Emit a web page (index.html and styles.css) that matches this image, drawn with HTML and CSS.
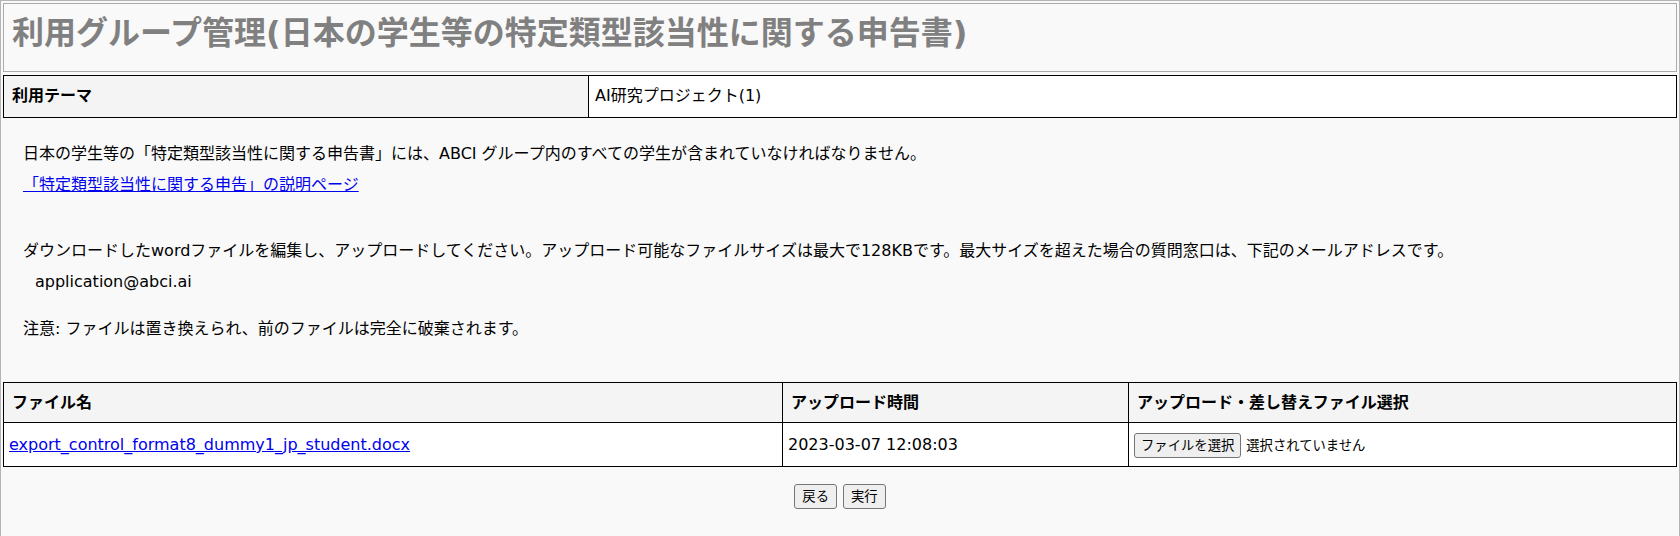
FILE: index.html
```html
<!DOCTYPE html>
<html lang="ja">
<head>
<meta charset="utf-8">
<title>利用グループ管理</title>
<link rel="stylesheet" href="styles.css">
</head>
<body>
<div class="page">
  <div class="title-box">
    <h1 class="title">利用グループ管理(日本の学生等の特定類型該当性に関する申告書)</h1>
  </div>

  <table class="info-table">
    <colgroup><col class="info-label-col"><col></colgroup>
    <tr>
      <th>利用テーマ</th>
      <td>AI研究プロジェクト(1)</td>
    </tr>
  </table>

  <div class="notice">
    <p class="line">日本の学生等の「特定類型該当性に関する申告書」には、ABCI グループ内のすべての学生が含まれていなければなりません。</p>
    <p class="line line-link"><a class="link" href="#">「特定類型該当性に関する申告」の説明ページ</a></p>
    <p class="line line-dl">ダウンロードしたwordファイルを編集し、アップロードしてください。アップロード可能なファイルサイズは最大で128KBです。最大サイズを超えた場合の質問窓口は、下記のメールアドレスです。</p>
    <p class="line line-mail">application@abci.ai</p>
    <p class="line line-note">注意: ファイルは置き換えられ、前のファイルは完全に破棄されます。</p>
  </div>

  <table class="file-table">
    <colgroup><col class="file-name-col"><col class="file-time-col"><col></colgroup>
    <tr>
      <th>ファイル名</th>
      <th>アップロード時間</th>
      <th>アップロード・差し替えファイル選択</th>
    </tr>
    <tr>
      <td><a class="link" href="#">export_control_format8_dummy1_jp_student.docx</a></td>
      <td>2023-03-07 12:08:03</td>
      <td class="file-cell">
        <div class="file-field">
          <button class="btn file-btn" type="button">ファイルを選択</button>
          <span class="file-status">選択されていません</span>
        </div>
      </td>
    </tr>
  </table>

  <div class="actions">
    <button class="btn action-btn" type="button">戻る</button>
    <button class="btn action-btn" type="button">実行</button>
  </div>
</div>
</body>
</html>
```

FILE: styles.css
```css
html, body {
  margin: 0;
  padding: 0;
}

body {
  background: #f9f9f9;
  color: #000;
  font-family: "DejaVu Sans", "Noto Sans CJK JP", sans-serif;
  font-size: 16px;
}

.page {
  height: 100vh;
  box-sizing: border-box;
  border: 1px solid #b4b4b4;
  border-bottom: 0;
  padding: 2px;
}

.title-box {
  height: 69px;
  box-sizing: border-box;
  border: 1px solid #aaaaaa;
  padding: 6px 8px 0;
}

.title {
  margin: 0;
  font-size: 32px;
  line-height: 47px;
  font-weight: bold;
  color: #808080;
  white-space: nowrap;
}

.info-table,
.file-table {
  width: 100%;
  border-collapse: collapse;
  table-layout: fixed;
}

.info-table {
  margin-top: 3px;
}

.info-label-col {
  width: 585px;
}

.file-name-col {
  width: 779px;
}

.file-time-col {
  width: 346px;
}

.info-table th,
.info-table td,
.file-table th,
.file-table td {
  border: 1px solid #000;
  text-align: left;
  vertical-align: middle;
}

.info-table th,
.file-table th {
  background: #f4f4f4;
  font-weight: bold;
}

.info-table td,
.file-table td {
  background: #ffffff;
}

.info-table th,
.info-table td {
  line-height: 24px;
  padding: 8px 6px 9px;
}

.info-table th {
  padding-left: 8px;
}

.file-table th {
  line-height: 24px;
  padding: 8px 8px 7px;
}

.file-table td {
  line-height: 25px;
  padding: 9px 5px 9px;
  white-space: nowrap;
}

.file-table td.file-cell {
  padding-top: 10px;
  padding-bottom: 8px;
}

.notice {
  padding: 21px 20px 0;
}

.line {
  margin: 0;
  line-height: 30px;
  white-space: nowrap;
}

.line-link {
  margin-top: 1px;
}

.line-dl {
  margin-top: 36px;
}

.line-mail {
  margin-top: 1px;
  padding-left: 12px;
}

.line-note {
  margin-top: 17px;
}

.link {
  color: #0000ee;
  text-decoration: underline;
}

.file-table {
  margin-top: 38px;
}

.file-field {
  display: flex;
  align-items: center;
  height: 25px;
}

.btn {
  box-sizing: border-box;
  height: 25px;
  margin: 0;
  border: 1px solid #767676;
  border-radius: 3px;
  background: #efefef;
  color: #000;
  font-family: "DejaVu Sans", "Noto Sans CJK JP", sans-serif;
  font-size: 13.33px;
  line-height: 23px;
  padding: 0 6px;
}

.file-status {
  margin-left: 5px;
  font-size: 13.33px;
  line-height: 25px;
}

.actions {
  display: flex;
  justify-content: center;
  gap: 6px;
  margin-top: 17px;
}

.action-btn {
  padding: 0 7px;
}
```
